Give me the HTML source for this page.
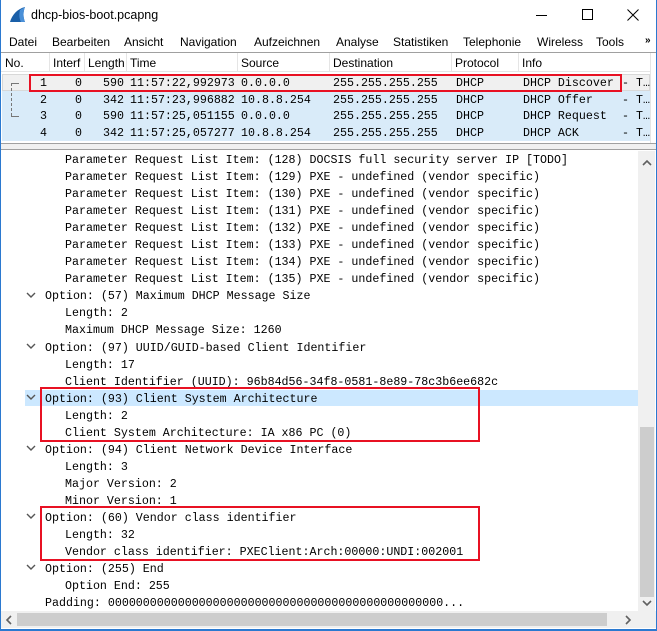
<!DOCTYPE html>
<html><head><style>
*{margin:0;padding:0;box-sizing:border-box}
body{width:657px;height:631px;position:relative;background:#fff;font-family:"Liberation Sans",sans-serif;font-size:12px;color:#000;overflow:hidden}
.a{position:absolute;white-space:pre}
.c{position:absolute;white-space:normal}
.m{font-family:"Liberation Mono",monospace;font-size:11.65px}
.rb{position:absolute;border:2px solid #e81123}
.d div{height:17.05px;line-height:17.05px;white-space:pre}
.l2{padding-left:45px}.l3{padding-left:65px}
.pr div{height:16.7px;line-height:16.7px;position:relative}
.pr span{position:absolute;top:0;white-space:pre}
</style></head><body>
<div class="a" style="left:0;top:0;width:657px;height:631px;border:1px solid #2b79d0;border-top:none"></div>
<svg class="a" style="left:8px;top:6px" width="20" height="18" viewBox="0 0 20 18"><path d="M2 16 C4 9 9 3 17 1 C15 6 15 11 17 16 Z" fill="#1a5fa8"/><path d="M12 4 C11 8 11 12 13 16 L17 16 C15 11 15 6 17 1 Z" fill="#4a90d8"/></svg>
<div class="a" style="left:31px;top:8px;font-size:12.5px">dhcp-bios-boot.pcapng</div>
<div class="a" style="left:536px;top:15px;width:11px;height:1px;background:#000"></div>
<div class="a" style="left:582px;top:9px;width:11px;height:11px;border:1px solid #000"></div>
<svg class="a" style="left:627px;top:9px" width="12" height="12"><path d="M0.5 0.5L11.5 11.5M11.5 0.5L0.5 11.5" stroke="#000" stroke-width="1"/></svg>
<div class="a" style="left:9px;top:35px">Datei</div>
<div class="a" style="left:52px;top:35px">Bearbeiten</div>
<div class="a" style="left:124px;top:35px">Ansicht</div>
<div class="a" style="left:180px;top:35px">Navigation</div>
<div class="a" style="left:254px;top:35px">Aufzeichnen</div>
<div class="a" style="left:336px;top:35px">Analyse</div>
<div class="a" style="left:393px;top:35px">Statistiken</div>
<div class="a" style="left:463px;top:35px">Telephonie</div>
<div class="a" style="left:537px;top:35px">Wireless</div>
<div class="a" style="left:596px;top:35px">Tools</div>
<div class="a" style="left:645px;top:35px;font-size:10px;font-weight:bold">»</div>
<div class="a" style="left:1px;top:52px;width:655px;height:92px;border-top:1px solid #a0a0a0;border-bottom:1px solid #a0a0a0"></div>
<div class="a" style="left:1px;top:53px;width:650px;height:19px;border-bottom:1px solid #e5e5e5"></div>
<div class="a" style="left:49px;top:53px;width:1px;height:19px;background:#e5e5e5"></div>
<div class="a" style="left:84px;top:53px;width:1px;height:19px;background:#e5e5e5"></div>
<div class="a" style="left:126px;top:53px;width:1px;height:19px;background:#e5e5e5"></div>
<div class="a" style="left:237px;top:53px;width:1px;height:19px;background:#e5e5e5"></div>
<div class="a" style="left:329px;top:53px;width:1px;height:19px;background:#e5e5e5"></div>
<div class="a" style="left:451px;top:53px;width:1px;height:19px;background:#e5e5e5"></div>
<div class="a" style="left:518px;top:53px;width:1px;height:19px;background:#e5e5e5"></div>
<div class="a" style="left:650px;top:53px;width:1px;height:90px;background:#e5e5e5"></div>
<div class="a" style="left:5px;top:56px">No.</div>
<div class="a" style="left:53px;top:56px">Interf</div>
<div class="a" style="left:88px;top:56px">Length</div>
<div class="a" style="left:130px;top:56px">Time</div>
<div class="a" style="left:241px;top:56px">Source</div>
<div class="a" style="left:333px;top:56px">Destination</div>
<div class="a" style="left:455px;top:56px">Protocol</div>
<div class="a" style="left:522px;top:56px">Info</div>
<div class="a" style="left:2px;top:74px;width:648px;height:17px;background:#f0f0f0;border:1px solid #d8d8d8"></div>
<div class="a" style="left:2px;top:91px;width:648px;height:50px;background:#d9ebf9"></div>
<div class="a" style="left:11px;top:83px;width:8px;height:1px;background:#777"></div>
<div class="a" style="left:11px;top:83px;width:0;height:33px;border-left:1px dashed #777"></div>
<div class="a" style="left:11px;top:116px;width:8px;height:1px;background:#777"></div>
<div class="c m pr" style="left:0;top:76px;width:650px">
<div><span style="left:40px">1</span><span style="left:75px">0</span><span style="left:103px">590</span><span style="left:130px">11:57:22,992973</span><span style="left:241px">0.0.0.0</span><span style="left:333px">255.255.255.255</span><span style="left:456px">DHCP</span><span style="left:523px">DHCP Discover</span><span style="left:622px">- T…</span></div>
<div><span style="left:40px">2</span><span style="left:75px">0</span><span style="left:103px">342</span><span style="left:130px">11:57:23,996882</span><span style="left:241px">10.8.8.254</span><span style="left:333px">255.255.255.255</span><span style="left:456px">DHCP</span><span style="left:523px">DHCP Offer</span><span style="left:622px">- T…</span></div>
<div><span style="left:40px">3</span><span style="left:75px">0</span><span style="left:103px">590</span><span style="left:130px">11:57:25,051155</span><span style="left:241px">0.0.0.0</span><span style="left:333px">255.255.255.255</span><span style="left:456px">DHCP</span><span style="left:523px">DHCP Request</span><span style="left:622px">- T…</span></div>
<div><span style="left:40px">4</span><span style="left:75px">0</span><span style="left:103px">342</span><span style="left:130px">11:57:25,057277</span><span style="left:241px">10.8.8.254</span><span style="left:333px">255.255.255.255</span><span style="left:456px">DHCP</span><span style="left:523px">DHCP ACK</span><span style="left:622px">- T…</span></div>
</div>
<div class="rb" style="left:29px;top:74px;width:593px;height:18px"></div>
<div class="a" style="left:1px;top:144px;width:655px;height:6px;background:#f0f0f0;border-bottom:1px solid #a0a0a0"></div>
<div class="a" style="left:25px;top:390px;width:613px;height:16px;background:#cce8ff"></div>
<div class="c m d" style="left:0;top:152px;width:638px;height:459px;overflow:hidden">
<div class="l3">Parameter Request List Item: (128) DOCSIS full security server IP [TODO]</div>
<div class="l3">Parameter Request List Item: (129) PXE - undefined (vendor specific)</div>
<div class="l3">Parameter Request List Item: (130) PXE - undefined (vendor specific)</div>
<div class="l3">Parameter Request List Item: (131) PXE - undefined (vendor specific)</div>
<div class="l3">Parameter Request List Item: (132) PXE - undefined (vendor specific)</div>
<div class="l3">Parameter Request List Item: (133) PXE - undefined (vendor specific)</div>
<div class="l3">Parameter Request List Item: (134) PXE - undefined (vendor specific)</div>
<div class="l3">Parameter Request List Item: (135) PXE - undefined (vendor specific)</div>
<div class="l2">Option: (57) Maximum DHCP Message Size</div>
<div class="l3">Length: 2</div>
<div class="l3">Maximum DHCP Message Size: 1260</div>
<div class="l2">Option: (97) UUID/GUID-based Client Identifier</div>
<div class="l3">Length: 17</div>
<div class="l3">Client Identifier (UUID): 96b84d56-34f8-0581-8e89-78c3b6ee682c</div>
<div class="l2">Option: (93) Client System Architecture</div>
<div class="l3">Length: 2</div>
<div class="l3">Client System Architecture: IA x86 PC (0)</div>
<div class="l2">Option: (94) Client Network Device Interface</div>
<div class="l3">Length: 3</div>
<div class="l3">Major Version: 2</div>
<div class="l3">Minor Version: 1</div>
<div class="l2">Option: (60) Vendor class identifier</div>
<div class="l3">Length: 32</div>
<div class="l3">Vendor class identifier: PXEClient:Arch:00000:UNDI:002001</div>
<div class="l2">Option: (255) End</div>
<div class="l3">Option End: 255</div>
<div class="l2">Padding: 000000000000000000000000000000000000000000000000...</div>
</div>
<svg class="a" style="left:26px;top:292px" width="10" height="300"><g fill="none" stroke="#555" stroke-width="1.4"><path d="M1 1l4 4 4-4"/><path d="M1 52l4 4 4-4"/><path d="M1 103l4 4 4-4"/><path d="M1 154l4 4 4-4"/><path d="M1 222l4 4 4-4"/><path d="M1 273l4 4 4-4"/></g></svg>
<div class="rb" style="left:40px;top:387px;width:440px;height:55px"></div>
<div class="rb" style="left:40px;top:506px;width:440px;height:55px"></div>
<div class="a" style="left:638px;top:151px;width:17px;height:460px;background:#f0f0f0"></div>
<div class="a" style="left:640px;top:427px;width:14px;height:170px;background:#cdcdcd"></div>
<svg class="a" style="left:642px;top:159px" width="10" height="8"><path d="M1 6l4-4 4 4" fill="none" stroke="#606060" stroke-width="1.6"/></svg>
<svg class="a" style="left:642px;top:599px" width="10" height="8"><path d="M1 2l4 4 4-4" fill="none" stroke="#606060" stroke-width="1.6"/></svg>
<div class="a" style="left:1px;top:611px;width:655px;height:17px;background:#f0f0f0"></div>
<div class="a" style="left:17px;top:613px;width:590px;height:13px;background:#cdcdcd"></div>
<svg class="a" style="left:5px;top:615px" width="8" height="10"><path d="M6 1l-4 4 4 4" fill="none" stroke="#606060" stroke-width="1.6"/></svg>
<svg class="a" style="left:624px;top:615px" width="8" height="10"><path d="M2 1l4 4-4 4" fill="none" stroke="#606060" stroke-width="1.6"/></svg>
<div class="a" style="left:0;top:629px;width:657px;height:2px;background:#2b79d0"></div>
</body></html>
